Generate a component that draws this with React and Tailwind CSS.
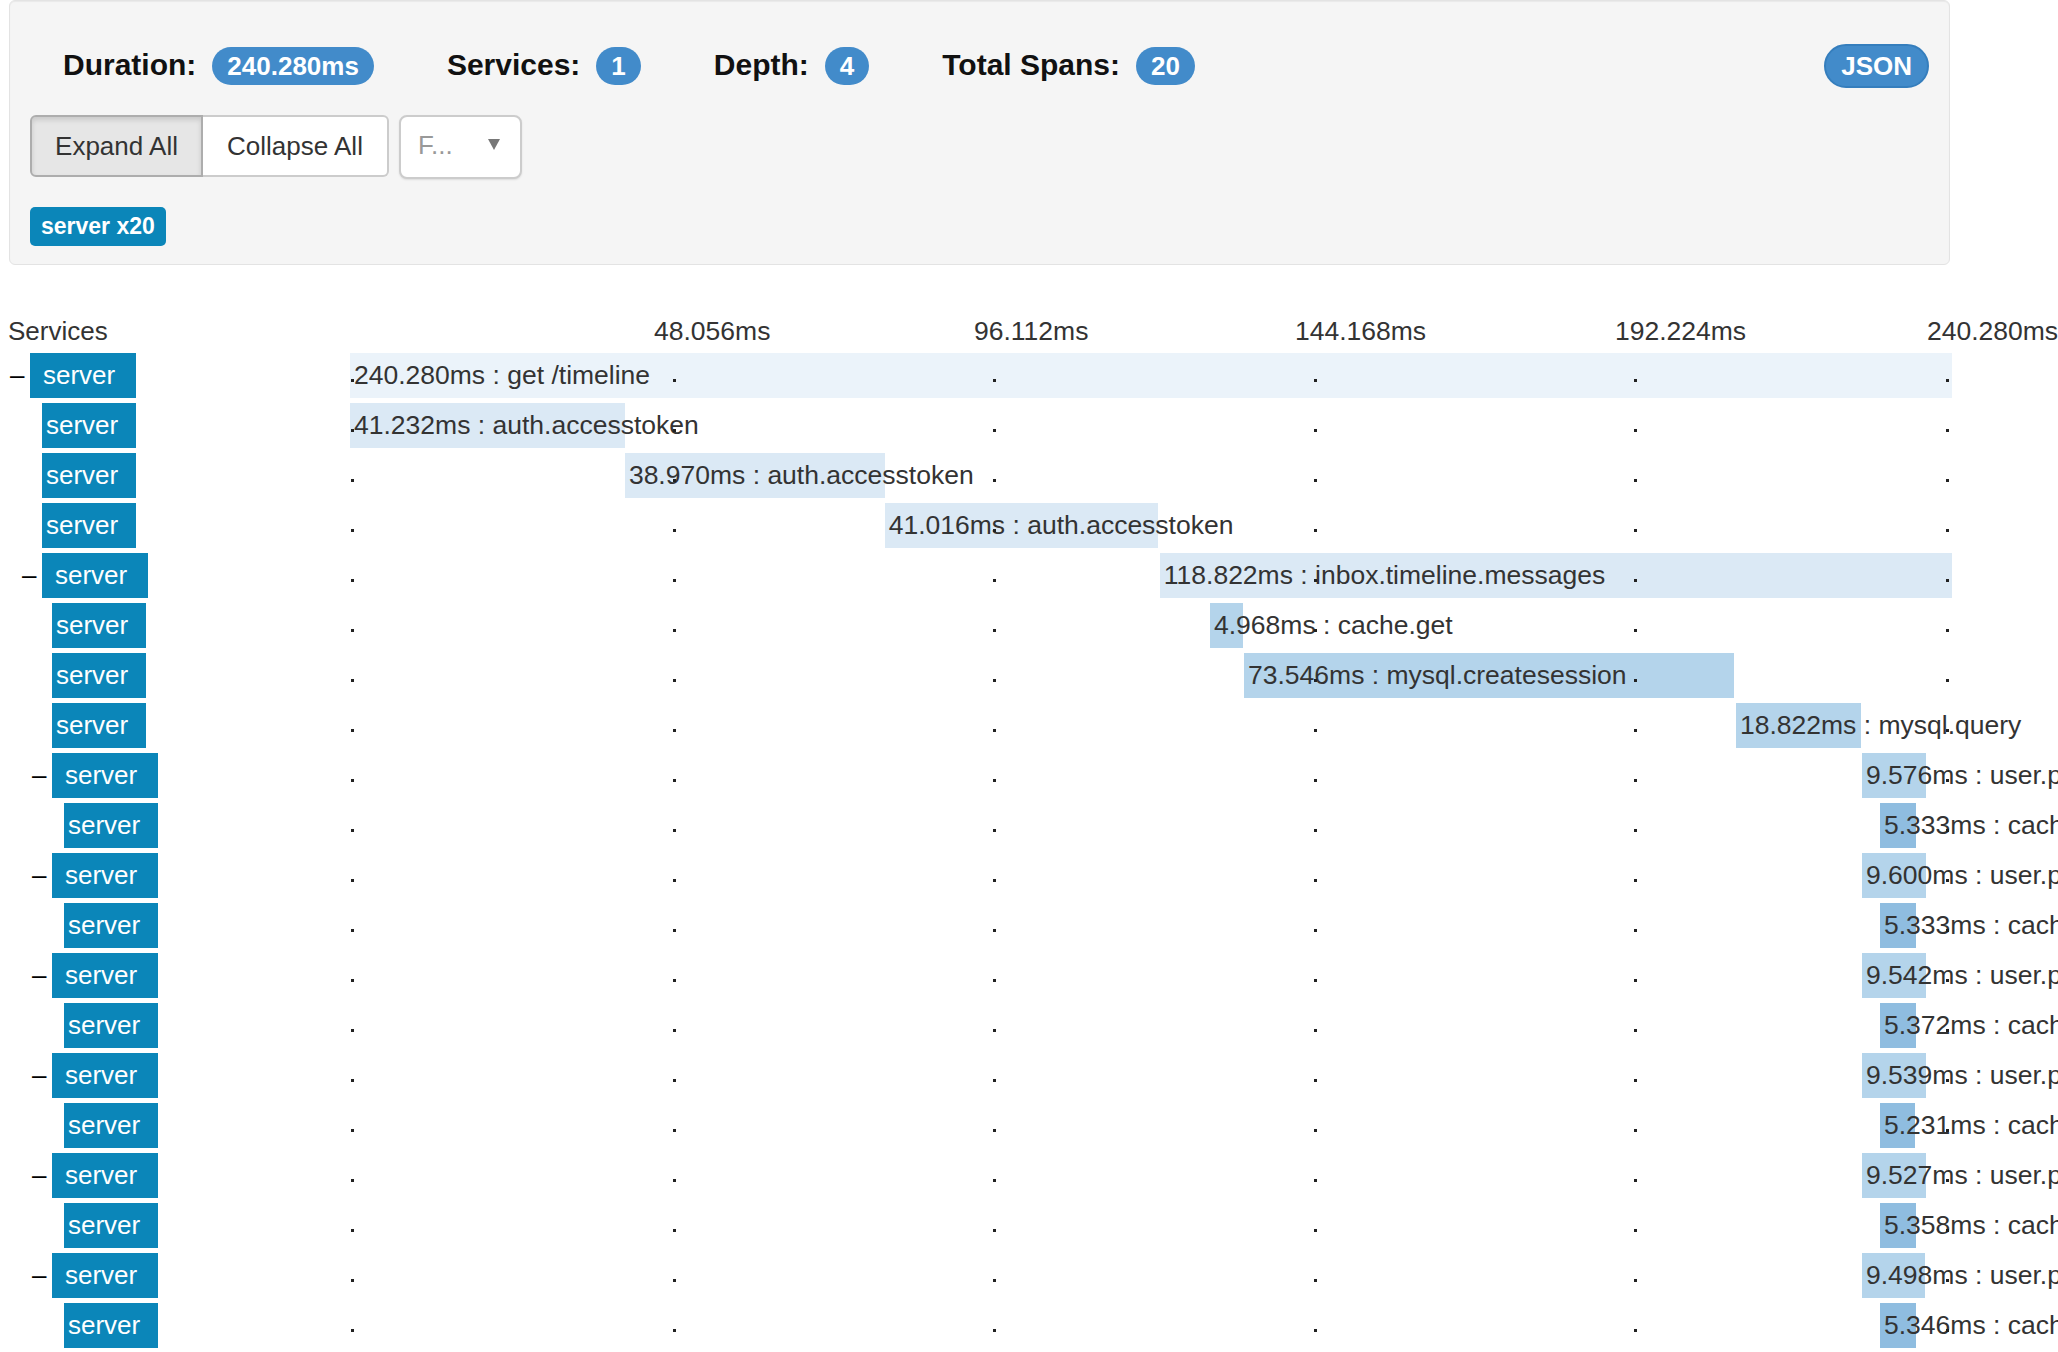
import React from 'react';

const TOTAL = 240.28;
const TRACK = 1602;

// depth, has children, start (ms), duration (ms), span name
const spans = [
  { d: 0, kids: true, start: 0, dur: '240.280', name: 'get /timeline' },
  { d: 1, kids: false, start: 0, dur: '41.232', name: 'auth.accesstoken' },
  { d: 1, kids: false, start: 41.232, dur: '38.970', name: 'auth.accesstoken' },
  { d: 1, kids: false, start: 80.202, dur: '41.016', name: 'auth.accesstoken' },
  { d: 1, kids: true, start: 121.458, dur: '118.822', name: 'inbox.timeline.messages' },
  { d: 2, kids: false, start: 128.99, dur: '4.968', name: 'cache.get' },
  { d: 2, kids: false, start: 134.09, dur: '73.546', name: 'mysql.createsession' },
  { d: 2, kids: false, start: 207.88, dur: '18.822', name: 'mysql.query' },
  { d: 2, kids: true, start: 226.78, dur: '9.576', name: 'user.profile' },
  { d: 3, kids: false, start: 229.48, dur: '5.333', name: 'cache.get' },
  { d: 2, kids: true, start: 226.78, dur: '9.600', name: 'user.profile' },
  { d: 3, kids: false, start: 229.48, dur: '5.333', name: 'cache.get' },
  { d: 2, kids: true, start: 226.78, dur: '9.542', name: 'user.profile' },
  { d: 3, kids: false, start: 229.48, dur: '5.372', name: 'cache.get' },
  { d: 2, kids: true, start: 226.78, dur: '9.539', name: 'user.profile' },
  { d: 3, kids: false, start: 229.48, dur: '5.231', name: 'cache.get' },
  { d: 2, kids: true, start: 226.78, dur: '9.527', name: 'user.profile' },
  { d: 3, kids: false, start: 229.48, dur: '5.358', name: 'cache.get' },
  { d: 2, kids: true, start: 226.78, dur: '9.498', name: 'user.profile' },
  { d: 3, kids: false, start: 229.48, dur: '5.346', name: 'cache.get' },
];

const indent = ['pl-[8px]', 'pl-[20px]', 'pl-[30px]', 'pl-[42px]'];
const barColor = ['bg-[#ebf3fa]', 'bg-[#dbe9f5]', 'bg-[#b4d4eb]', 'bg-[#8fbde0]'];

const ticks = [
  { label: '48.056ms', x: 'left-[304px]' },
  { label: '96.112ms', x: 'left-[624px]' },
  { label: '144.168ms', x: 'left-[945px]' },
  { label: '192.224ms', x: 'left-[1265px]' },
  { label: '240.280ms', x: 'left-[1577px]' },
];
const dotPos = ['left-[1px]', 'left-[323px]', 'left-[643px]', 'left-[964px]', 'left-[1284px]', 'left-[1596px]'];

const Stat = ({ label, value }) => (
  <div className="flex items-baseline gap-[16px]">
    <span className="text-[30px] leading-[38px] font-bold text-[#111]">{label}</span>
    <span className="inline-block h-[38px] leading-[38px] px-[15px] rounded-full bg-[#428bca] text-white text-[26px] font-bold">
      {value}
    </span>
  </div>
);

const SpanRow = ({ span }) => {
  const left = (span.start / TOTAL) * TRACK;
  const width = (parseFloat(span.dur) / TOTAL) * TRACK;
  return (
    <div className="flex h-[50px]">
      <div className={`w-[350px] shrink-0 flex pt-[2px] ${indent[span.d]}`}>
        <span className="w-[22px] h-[45px] leading-[45px] pl-[2px] text-[26px] text-black">
          {span.kids ? '–' : ''}
        </span>
        <span
          className={`h-[45px] leading-[45px] bg-[#0b86b9] text-white text-[26px] ${
            span.kids ? 'pl-[13px] pr-[21px]' : 'pl-[4px] pr-[18px]'
          }`}
        >
          server
        </span>
      </div>
      <div className="relative w-[1602px] shrink-0">
        <div
          className={`absolute top-[2px] h-[45px] ${barColor[span.d]}`}
          style={{ left: `${left}px`, width: `${width}px` }}
        >
          <span className="block pl-[4px] leading-[45px] text-[26.5px] text-[#333] whitespace-nowrap">
            {span.dur}ms : {span.name}
          </span>
        </div>
        {dotPos.map((p) => (
          <span key={p} className={`absolute top-[28px] w-[3px] h-[3px] bg-[#222] ${p}`} />
        ))}
      </div>
    </div>
  );
};

export default function App() {
  return (
    <div className="w-[2058px] h-[1352px] overflow-hidden bg-white text-[#333] font-['Liberation_Sans',Arial,sans-serif]">
      {/* trace summary */}
      <div className="ml-[9px] w-[1941px] bg-[#f5f5f5] border border-[#e3e3e3] rounded-[6px] shadow-[inset_0_1px_1px_rgba(0,0,0,0.05)] pt-[43px] pb-[18px] px-[20px]">
        <div className="flex items-baseline pl-[33px]">
          <div className="flex items-baseline gap-[73px]">
            <Stat label="Duration:" value="240.280ms" />
            <Stat label="Services:" value="1" />
            <Stat label="Depth:" value="4" />
            <Stat label="Total Spans:" value="20" />
          </div>
          <button className="ml-auto h-[44px] leading-[40px] px-[15px] rounded-full bg-[#428bca] border-2 border-[#357ebd] text-white text-[26px] font-bold">
            JSON
          </button>
        </div>

        <div className="flex mt-[27px]">
          <div className="flex h-[62px]">
            <button className="w-[173px] h-full bg-[#e6e6e6] border-2 border-[#adadad] rounded-l-[6px] shadow-[inset_0_3px_5px_rgba(0,0,0,0.125)] text-[26px] text-[#333]">
              Expand All
            </button>
            <button className="w-[186px] h-full bg-white border-2 border-l-0 border-[#ccc] rounded-r-[6px] text-[26px] text-[#333]">
              Collapse All
            </button>
          </div>
          <div className="ml-[10px] w-[123px] h-[64px] bg-white border-2 border-[#ccc] rounded-[8px] shadow-[0_1px_2px_rgba(0,0,0,0.1)] flex items-start pt-[10px] pl-[17px] pr-[20px]">
            <span className="text-[26px] leading-[36px] text-[#999]">F...</span>
            <svg className="ml-auto mt-[12px]" width="12" height="11" viewBox="0 0 12 11">
              <path d="M0 0 H12 L6 11 Z" fill="#777" />
            </svg>
          </div>
        </div>

        <div className="mt-[28px]">
          <span className="inline-block h-[39px] leading-[39px] px-[11px] rounded-[5px] bg-[#0b86b9] text-white text-[23px] font-bold">
            server x20
          </span>
        </div>
      </div>

      {/* timeline header */}
      <div className="flex h-[39px] mt-[47px] items-center">
        <div className="w-[350px] shrink-0 pl-[8px] text-[26px]">Services</div>
        <div className="relative w-[1602px] h-full shrink-0">
          {ticks.map((t) => (
            <span key={t.label} className={`absolute top-0 leading-[39px] text-[26.5px] whitespace-nowrap ${t.x}`}>
              {t.label}
            </span>
          ))}
        </div>
      </div>

      {/* spans */}
      <div>
        {spans.map((s, i) => (
          <SpanRow key={i} span={s} />
        ))}
      </div>
    </div>
  );
}
